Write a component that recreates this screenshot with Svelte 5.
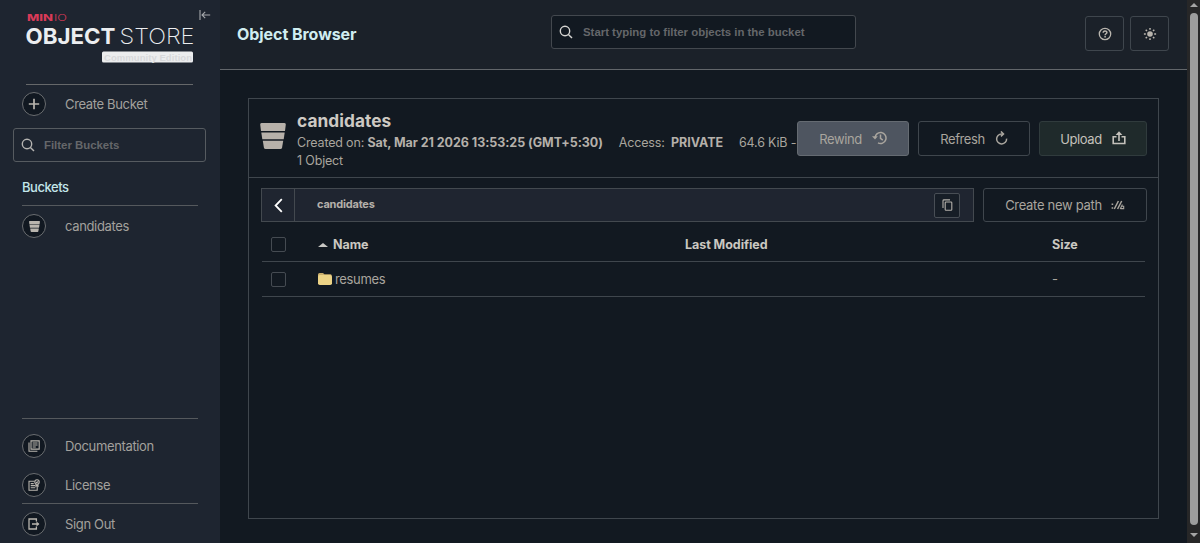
<script lang="ts">
  const columns = ['Last Modified', 'Size'];
  const objects = [{ name: 'resumes', modified: '', size: '-' }];
  const bucket = {
    name: 'candidates',
    created: 'Sat, Mar 21 2026 13:53:25 (GMT+5:30)',
    access: 'PRIVATE',
    size: '64.6 KiB -',
    count: '1 Object'
  };

  let bucketFilter = $state('');
  let objectFilter = $state('');
</script>

{#snippet magnifier()}
  <svg class="magnifier" viewBox="0 0 14 14" width="14" height="14">
    <circle cx="6" cy="6" r="4.7" />
    <path d="M9.4 9.4l3.6 3.7" />
  </svg>
{/snippet}

{#snippet bucketIcon(size: number)}
  <svg viewBox="0 0 26 26" width={size} height={size} fill="currentColor">
    <path d="M1.5 0h23Q26 0 25.8 1.6L25 8H1L.2 1.6Q0 0 1.5 0z" />
    <path d="M1.3 9.6h23.4l-1 6.6H2.3z" />
    <path d="M2.8 17.8h20.4l-1.1 6.7q-.3 1.5-1.7 1.5H5.6q-1.4 0-1.7-1.5z" />
  </svg>
{/snippet}

<div class="app">
  <aside>
    <div class="brand">
      <svg class="logo" viewBox="0 0 168 50" width="168" height="50">
        <text class="mini" x="1" y="9.3" textLength="26" lengthAdjust="spacingAndGlyphs" font-weight="800">MIN</text>
        <text class="mini" x="28" y="9.3" textLength="13" lengthAdjust="spacingAndGlyphs" font-weight="300">IO</text>
        <text class="word" x="-.5" y="32.3" textLength="90" lengthAdjust="spacingAndGlyphs" font-weight="700">OBJECT</text>
        <text class="word" x="93.5" y="32.3" textLength="75" lengthAdjust="spacingAndGlyphs" font-weight="200">STORE</text>
        <rect x="76" y="39.5" width="91" height="11" rx="1.5" fill="#ecedee" />
        <text class="edition" x="78" y="48.5" textLength="88">Community Edition</text>
      </svg>
      <button class="collapse" aria-label="Collapse menu">
        <svg viewBox="0 0 12 12" width="12" height="12">
          <path d="M1 1v10M11.2 6H3M6.2 2.8L3 6l3.2 3.2" />
        </svg>
      </button>
    </div>

    <button class="item create">
      <span class="round">
        <svg viewBox="0 0 12 12" width="12" height="12" stroke="currentColor" stroke-width="1.7">
          <path d="M6 .8v10.4M.8 6h10.4" />
        </svg>
      </span>
      Create Bucket
    </button>

    <label class="field filter">
      {@render magnifier()}
      <input placeholder="Filter Buckets" bind:value={bucketFilter} />
    </label>

    <h2>Buckets</h2>
    <button class="item current">
      <span class="round">{@render bucketIcon(11)}</span>
      {bucket.name}
    </button>

    <nav>
      <button class="item">
        <span class="round">
          <svg viewBox="0 0 12 12" width="12" height="12" fill="none" stroke="currentColor" stroke-width="1.1">
            <path d="M3 .9h8.2v8.2H3zM1 2.6v8.6h8.4M4.6 3h5M4.6 5h5M4.6 7h3.2" />
          </svg>
        </span>
        Documentation
      </button>
      <button class="item license">
        <span class="round">
          <svg viewBox="0 0 12 12" width="12" height="12" fill="none" stroke="currentColor" stroke-width="1.1">
            <path d="M6.5 2.3H1v8.9h8.2V7M2.7 4.6h3M2.7 6.6h4.6M2.7 8.8h4.6" />
            <circle cx="9" cy="3" r="2.2" />
            <path d="M8 3l.8.8L10.2 2.4M8 5v2.2l1-.7 1 .7V5" />
          </svg>
        </span>
        License
      </button>
      <button class="item signout">
        <span class="round">
          <svg viewBox="0 0 12 12" width="12" height="12" fill="none" stroke="currentColor" stroke-width="1.3">
            <path d="M8.4 3.5V1H1v10h7.4V8.5M4 6h6.5" />
            <path d="M8.5 3.6L11.4 6 8.5 8.4z" fill="currentColor" stroke="none" />
          </svg>
        </span>
        Sign Out
      </button>
    </nav>
  </aside>

  <main>
    <header>
      <h1>Object Browser</h1>
      <label class="field search">
        {@render magnifier()}
        <input placeholder="Start typing to filter objects in the bucket" bind:value={objectFilter} />
      </label>
      <div class="tools">
        <button class="btn square" aria-label="Help">
          <svg viewBox="0 0 14 14" width="14" height="14" fill="none" stroke="currentColor" stroke-width="1.3">
            <circle cx="7" cy="7" r="5.7" />
            <path d="M5.2 5.7c0-2.4 3.7-2.3 3.7-.2 0 1.3-1.8 1.2-1.8 2.7" stroke-width="1.5" />
            <path d="M7.1 9.1v1.5" stroke-width="1.5" />
          </svg>
        </button>
        <button class="btn square" aria-label="Light mode">
          <svg viewBox="0 0 14 14" width="14" height="14" stroke="currentColor" stroke-width="1.5">
            <circle cx="7" cy="7" r="2.8" fill="currentColor" stroke="none" />
            <path d="M7 .9v1.9M7 11.2v1.9M.9 7h1.9M11.2 7h1.9M2.7 2.7L4 4M10 10l1.3 1.3M2.7 11.3L4 10M10 4l1.3-1.3" />
          </svg>
        </button>
      </div>
    </header>

    <section class="card">
      <div class="summary">
        <span class="big">{@render bucketIcon(26)}</span>
        <div class="info">
          <h3>{bucket.name}</h3>
          <p>
            <span>Created on: <b>{bucket.created}</b></span>
            <span>Access: <b class="access">{bucket.access}</b></span>
            <span>{bucket.size}</span>
          </p>
          <p>{bucket.count}</p>
        </div>
        <div class="actions">
          <button class="btn rewind">
            Rewind
            <svg viewBox="0 0 15 14" width="15" height="14" fill="none" stroke="currentColor" stroke-width="1.5">
              <path d="M3 7a5.5 5.5 0 1 1 3 4.9M8.5 3.6v3.7l2.3 1.9" />
              <path d="M0 5.3h5.8L3 8.6z" fill="currentColor" stroke="none" />
            </svg>
          </button>
          <button class="btn refresh">
            Refresh
            <svg viewBox="0 0 13 14" width="13" height="14" fill="none" stroke="currentColor" stroke-width="1.5">
              <path d="M11.6 7.6a5 5 0 1 1-5-4.7h1.6" />
              <path d="M5.9 .4l2.6 2.5-2.6 2.5" />
            </svg>
          </button>
          <button class="btn upload">
            Upload
            <svg viewBox="0 0 14 14" width="14" height="14" fill="none" stroke="currentColor" stroke-width="1.6">
              <path d="M4.5 5.8H1.2v6.7h11.6V5.8H9.5M7 10V2.5" />
              <path d="M3.6 4L7 .3 10.4 4z" fill="currentColor" stroke="none" />
            </svg>
          </button>
        </div>
      </div>

      <div class="pathrow">
        <div class="path">
          <button class="back" aria-label="Back">
            <svg viewBox="0 0 9 15" width="9" height="15" fill="none" stroke="#fff" stroke-width="1.8">
              <path d="M7.8 1.2L1.6 7.5l6.2 6.3" />
            </svg>
          </button>
          <span>{bucket.name}</span>
          <button class="copy" aria-label="Copy path">
            <svg viewBox="0 0 11 12" width="11" height="12" fill="none" stroke="currentColor" stroke-width="1.1">
              <rect x="3.2" y="3" width="6.6" height="8.2" rx=".8" />
              <path d="M1 9V1.8Q1 .9 1.9.9H8" />
            </svg>
          </button>
        </div>
        <button class="btn newpath">
          Create new path
          <svg viewBox="0 0 14 10" width="14" height="10" fill="none" stroke="currentColor" stroke-width="1.5">
            <path d="M.6 4.3h1.6M.6 8h1.6M3.3 9L7.4 1M6.6 9L10.7 1" />
            <path d="M9.2 9l2.2-4.6M10.2 6.2h2.5v2.4H9.6" stroke-width="1.1" />
          </svg>
        </button>
      </div>

      <div class="table">
        <div class="row head">
          <input type="checkbox" aria-label="Select all" />
          <span class="name"><i class="caret"></i>Name</span>
          {#each columns as column}
            <span>{column}</span>
          {/each}
        </div>
        {#each objects as object}
          <div class="row">
            <input type="checkbox" aria-label="Select {object.name}" />
            <span class="name">
              <svg viewBox="0 0 14 12" width="14" height="12">
                <path d="M0 1.5Q0 0 1.5 0H5l1.4 1.2h5.8Q13.6 1.2 13.6 2.6V6H0z" fill="#c9ae6c" />
                <rect y="2" width="14" height="10" rx="1.8" fill="#ecd386" />
              </svg>
              {object.name}
            </span>
            <span>{object.modified}</span>
            <span>{object.size}</span>
          </div>
        {/each}
      </div>
    </section>
  </main>

  <div class="scrollbar">
    <i class="up"></i>
    <div class="thumb"></div>
    <i class="down"></i>
  </div>
</div>

<style>
  :global(body) { margin: 0; background: #121921; }
  .app { display: flex; width: 1200px; height: 543px; overflow: hidden; font: 13px/18px Inter, sans-serif; letter-spacing: -0.35px; color: #a9a59e; background: #121921; }
  .app *, .app { box-sizing: border-box; }
  h1, h2, h3, p { margin: 0; }
  svg { display: block; flex: none; }
  button { font: inherit; letter-spacing: inherit; color: inherit; background: none; border: 0; padding: 0; cursor: pointer; white-space: nowrap; }

  /* sidebar */
  aside { width: 220px; flex: none; display: flex; flex-direction: column; background: #1e2530; padding-bottom: 7px; }
  .brand { display: flex; margin: 0 27px 0 26px; padding-top: 12px; height: 85px; border-bottom: 1px solid #66686a; }
  .logo { flex: none; overflow: visible; letter-spacing: 0; }
  .mini { font-size: 9px; fill: #d93a58; }
  .word { font-size: 22px; fill: #eceef0; }
  .edition { font: 700 9.5px "Liberation Sans", sans-serif; fill: #d8d9db; }
  .collapse { height: 12px; margin: -3px 0 0 5px; }
  .collapse path { fill: none; stroke: #a5a8ac; stroke-width: 1.1; }
  .item { display: flex; align-items: center; gap: 19px; height: 24px; margin-left: 22px; color: #a3a19d; }
  .round { display: flex; align-items: center; justify-content: center; width: 24px; height: 24px; border: 1px solid #6a6d70; border-radius: 50%; background: #111821; color: #b9b5ae; }
  .create { margin-top: 7px; }
  .field { display: flex; align-items: center; height: 34px; border: 1px solid #565b60; border-radius: 3px; }
  .field input { flex: 1; min-width: 0; border: 0; outline: 0; padding: 0; background: none; color: #a9a59e; font: 700 11.4px "Liberation Sans", sans-serif; letter-spacing: 0; }
  .field input::placeholder { color: #65676a; opacity: 1; }
  .magnifier { fill: none; stroke: #b5b4b1; stroke-width: 1.4; }
  .filter { margin: 12px 14px 0 13px; padding-left: 7px; gap: 9px; }
  h2 { margin: 16px 22px 0; height: 28px; border-bottom: 1px solid #55595d; color: #c3e6ea; font-size: 13px; font-weight: 500; line-height: 19px; letter-spacing: -0.45px; }
  .current { margin-top: 8px; }
  nav { display: flex; flex-direction: column; margin: auto 22px 0; border-top: 1px solid #55595d; padding-top: 15px; }
  nav .item { margin-left: 0; }
  nav .license { margin-top: 15px; }
  nav .signout { height: 33px; margin-top: 6px; border-top: 1px solid #55595d; padding-top: 8px; }

  /* top bar */
  main { flex: 1; min-width: 0; display: flex; flex-direction: column; }
  header { display: flex; align-items: center; height: 70px; padding: 0 18px 2px 17px; background: #1b2129; border-bottom: 1px solid #62666a; }
  h1 { width: 314px; color: #d0edf0; font-size: 16px; font-weight: 700; letter-spacing: -0.05px; }
  .search { width: 305px; background: #121921; padding-left: 7px; gap: 10px; margin-bottom: 3px; border-color: #43484e; }
  .search .magnifier { stroke: #d6d5d2; }
  .tools { display: flex; gap: 6px; margin-left: auto; }
  .btn { display: flex; align-items: center; justify-content: center; gap: 10px; height: 35px; border: 1px solid #3f464d; border-radius: 3px; }
  .square { width: 39px; color: #b9b5ae; }

  /* bucket card */
  .card { width: 911px; height: 421px; margin: 28px 0 0 28px; border: 1px solid #3f464d; }
  .summary { display: flex; height: 79px; padding: 0 11px; border-bottom: 1px solid #3f464d; }
  .big { margin: 24px 11px 0 0; color: #b7b1aa; }
  .info { flex: 1; min-width: 0; padding-top: 11px; white-space: nowrap; }
  h3 { color: #cdc9c3; font-size: 17.3px; line-height: 21px; font-weight: 700; letter-spacing: 0.05px; }
  .info p { display: flex; gap: 16px; font-size: 12.5px; line-height: 18px; margin-top: 3px; letter-spacing: -0.17px; }
  .info p + p { margin-top: 0; }
  b { font-weight: 700; color: #b5b0aa; letter-spacing: -0.05px; }
  .access { margin-left: 3px; }
  .actions { display: flex; gap: 9px; padding-top: 22px; }
  .rewind { width: 112px; background: #4e5560; border-color: #656b72; }
  .refresh { width: 112px; }
  .upload { width: 108px; background: #1f2a2b; border-color: #303b3d; color: #c4c1bb; }
  .actions svg { margin-top: -1px; }
  .actions .btn { letter-spacing: -0.4px; }
  .pathrow { display: flex; gap: 9px; padding: 10px 11px 0 12px; }
  .path { flex: 1; display: flex; align-items: center; height: 34px; padding-right: 13px; border: 1px solid #43494f; background: #1f2530; color: #b4b0aa; font-size: 11px; font-weight: 700; letter-spacing: -0.2px; }
  .back { display: flex; align-items: center; justify-content: center; width: 33px; height: 32px; border-right: 1px solid #43494f; }
  .path span { flex: 1; padding: 0 0 2px 22px; }
  .copy { display: flex; align-items: center; justify-content: center; width: 26px; height: 25px; border: 1px solid #484e55; border-radius: 2px; background: #171e27; }
  .newpath { width: 164px; height: 34px; gap: 9px; letter-spacing: -0.3px; }
  .table { margin: 5px 13px 0; }
  .row { display: grid; grid-template-columns: 56px 367px 367px 1fr; align-items: center; height: 35px; border-bottom: 1px solid #3f464d; }
  .head { font-size: 12.5px; font-weight: 700; color: #cbc8c1; letter-spacing: -0.05px; }
  .head span { padding-top: 1px; }
  .row input { appearance: none; width: 15px; height: 15px; margin: 0 0 0 9px; border: 1px solid #454b52; border-radius: 2px; }
  .name { display: flex; align-items: center; gap: 3px; }
  .caret { border: 5px solid transparent; border-top: 0; border-bottom: 4px solid #c8c8c4; margin-right: 2px; }

  /* page scrollbar */
  .scrollbar { width: 13px; flex: none; display: flex; flex-direction: column; align-items: center; padding: 3px 0 6px; background: #272728; }
  .thumb { flex: 1; width: 8px; margin: 6px 0 8px; border-radius: 4px; background: #9d9d9d; }
  .up, .down { border: 4px solid transparent; }
  .up { border-top: 0; border-bottom-color: #a5a5a5; }
  .down { border-bottom: 0; border-top-color: #a5a5a5; }
</style>
